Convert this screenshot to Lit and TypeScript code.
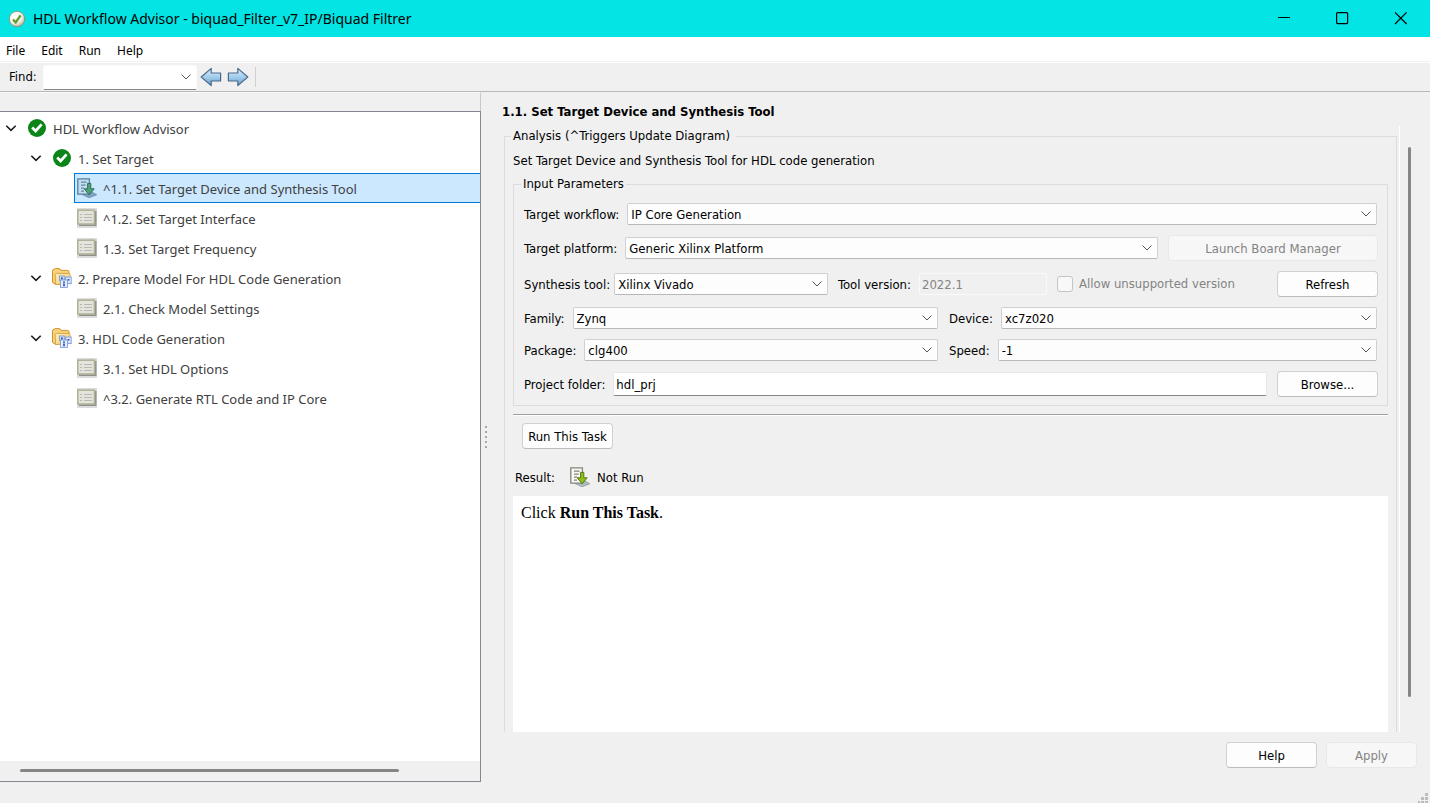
import { LitElement, html, css, svg, nothing, type TemplateResult } from "lit";
import { customElement, property, state } from "lit/decorators.js";
import { classMap } from "lit/directives/class-map.js";

/* ---------- icons ---------- */

const appIcon = svg`<svg class="app-icon" width="18" height="18" viewBox="0 0 18 18" aria-hidden="true">
  <defs><radialGradient id="ball" cx="0.35" cy="0.3" r="0.8"><stop offset="0" stop-color="#fff"/><stop offset="0.6" stop-color="#f0efe4"/><stop offset="1" stop-color="#a9a58c"/></radialGradient></defs>
  <circle cx="9" cy="9" r="7.7" fill="url(#ball)" stroke="#8d8a6c" stroke-width="0.8"/>
  <path d="M5 9.4 7.7 12.4 12.6 5.4" fill="none" stroke="#5c9c2c" stroke-width="2.2"/>
</svg>`;

const passedIcon = svg`<svg width="20" height="20" viewBox="0 0 20 20" aria-hidden="true">
  <circle cx="10" cy="10" r="9" fill="#0b8418"/>
  <path d="M5.2 9.6 8.6 12.9 14.6 6.4" fill="none" stroke="#fff" stroke-width="2.8"/>
</svg>`;

const taskIcon = svg`<svg width="20" height="20" viewBox="0 0 20 20" aria-hidden="true">
  <rect width="20" height="20" fill="#dcdcdc"/>
  <path d="M2 17.2H18.6V3" fill="none" stroke="#8f8f8c" stroke-width="1.8"/>
  <rect x="0.8" y="2.2" width="16.6" height="13.8" fill="#e4e4dc" stroke="#b2b498" stroke-width="1.6"/>
  <path d="M3 6.5h2M3 9.5h2M3 12.5h2M7 6.5h8M7 9.5h8M7 12.5h8" stroke="#b9b9b4" stroke-width="1"/>
</svg>`;

const folderIcon = svg`<svg width="20" height="20" viewBox="0 0 20 20" aria-hidden="true">
  <defs><linearGradient id="gold" x1="0" y1="0" x2="1" y2="1"><stop offset="0" stop-color="#fdf0c0"/><stop offset="1" stop-color="#f2c55c"/></linearGradient></defs>
  <path d="M0.5 14.5V3.2Q0.5 1.6 2 1.2L3.2 0.6H7Q8.4 0.6 9 2.4H15.5Q17 2.4 17 4V14L4 16.6Z" fill="#f6d37c" stroke="#cf9230"/>
  <path d="M3.6 16.6 3.2 6.4Q3.2 5.4 4.4 5.4H16.8Q18 5.4 18 6.6V15.4Z" fill="url(#gold)" stroke="#d9a040" stroke-width="0.9"/>
  <rect x="7.5" y="8" width="4.8" height="4.4" fill="#cfe0fa" stroke="#7c9cda" stroke-width="0.9"/>
  <rect x="13.6" y="9" width="5.6" height="6.6" fill="#dbe7fb" stroke="#7c9cda" stroke-width="0.9"/>
  <rect x="8.4" y="12" width="7" height="7.4" fill="#e6effd" stroke="#7c9cda" stroke-width="0.9"/>
  <path d="M9 9.4h1.8v1.8H9zM15.8 11h1.6v1.6h-1.6zM11 13.4h2v1.4h-2zM11.2 15.4h1.6v2.8h-1.6z" fill="#2f49ac"/>
</svg>`;

const readyIcon = (tinted: boolean) => {
  const page = tinted ? "#c4def0" : "#f7f7f4";
  const edge = tinted ? "#5580a0" : "#85857e";
  const line = tinted ? "#5f88a8" : "#85857e";
  const arrow = tinted ? "#4fa278" : "#8fbe1e";
  const arrowEdge = tinted ? "#2b6f58" : "#547a0c";
  const tray = tinted ? "#7ea4bf" : "#a9bcc4";
  return svg`<svg width="20" height="20" viewBox="0 0 20 20" aria-hidden="true">
    <path d="M5 16.6 14 13.4 19.8 16.8 12 19.8z" fill=${tray} stroke=${edge} stroke-width="0.6"/>
    <path d="M0.8 0.8H12.4V16.2H0.8z" fill=${page} stroke=${edge} stroke-width="1.3"/>
    <path d="M4 4.2h5.6M4 7.2h4.6M4 10.2h3M4 13.2h3" stroke=${line} stroke-width="1.2"/>
    <path d="M10.6 5.4h3.2v5.4h3.4L12.2 16.8 7.2 10.8h3.4z" fill=${arrow} stroke=${arrowEdge} stroke-width="1"/>
  </svg>`;
};

const chevron = svg`<svg width="12" height="12" viewBox="0 0 12 12" aria-hidden="true">
  <path d="M1.3 3.8 6 8.4 10.7 3.8" fill="none" stroke="#1c1c1c" stroke-width="1.6"/>
</svg>`;

const arrowIcon = (d: string) => svg`<svg width="22" height="20" viewBox="0 0 22 20" aria-hidden="true">
  <defs><linearGradient id="sky" x1="0" y1="0" x2="0" y2="1"><stop offset="0" stop-color="#dcefff"/><stop offset="0.5" stop-color="#a3cdec"/><stop offset="1" stop-color="#659cc8"/></linearGradient></defs>
  <path d=${d} fill="url(#sky)" stroke="#4a6a8c" stroke-width="1.2" stroke-linejoin="round"/>
</svg>`;

/* ---------- data ---------- */

interface TreeItem {
  label: string;
  icon: TemplateResult | ReturnType<typeof svg>;
  children?: TreeItem[];
}

const tree: TreeItem = {
  label: "HDL Workflow Advisor",
  icon: passedIcon,
  children: [
    {
      label: "1. Set Target",
      icon: passedIcon,
      children: [
        { label: "^1.1. Set Target Device and Synthesis Tool", icon: readyIcon(true) },
        { label: "^1.2. Set Target Interface", icon: taskIcon },
        { label: "1.3. Set Target Frequency", icon: taskIcon },
      ],
    },
    {
      label: "2. Prepare Model For HDL Code Generation",
      icon: folderIcon,
      children: [{ label: "2.1. Check Model Settings", icon: taskIcon }],
    },
    {
      label: "3. HDL Code Generation",
      icon: folderIcon,
      children: [
        { label: "3.1. Set HDL Options", icon: taskIcon },
        { label: "^3.2. Generate RTL Code and IP Core", icon: taskIcon },
      ],
    },
  ],
};

/* ---------- task tree ---------- */

@customElement("task-tree")
class TaskTree extends LitElement {
  static styles = css`
    :host { display: block; font: 13px/20px "Noto Sans", sans-serif; color: #404040; }
    ul { list-style: none; margin: 0; padding: 0; }
    .group { padding-left: 25px; }
    .row { display: flex; height: 30px; }
    .toggle { flex: none; width: 24px; border: 0; padding: 0 2px 0 5px; background: none; display: flex; align-items: center; }
    .toggle.closed svg { transform: rotate(-90deg); }
    .spacer { flex: none; width: 24px; }
    .item {
      flex: 1; display: flex; align-items: center; gap: 6px; box-sizing: border-box;
      border: 1px solid transparent; border-right: 0; padding: 0 0 0 2px;
      background: none; font: inherit; color: inherit; text-align: left; white-space: nowrap;
    }
    .item span { padding-top: 2px; }
    .item svg { flex: none; }
    .item.selected { background: #cce8ff; border-color: #0078d7; }
  `;

  @state() private selected = "^1.1. Set Target Device and Synthesis Tool";
  @state() private closed: string[] = [];

  private toggle(label: string) {
    this.closed = this.closed.includes(label) ? this.closed.filter((l) => l !== label) : [...this.closed, label];
  }

  private renderItem(item: TreeItem): TemplateResult {
    const closed = this.closed.includes(item.label);
    return html`<li role="treeitem" aria-selected=${this.selected === item.label}>
      <div class="row">
        ${item.children
          ? html`<button class=${classMap({ toggle: true, closed })} aria-label="Expand or collapse" @click=${() => this.toggle(item.label)}>${chevron}</button>`
          : html`<span class="spacer"></span>`}
        <button class=${classMap({ item: true, selected: this.selected === item.label })} @click=${() => (this.selected = item.label)}>
          ${item.icon}<span>${item.label}</span>
        </button>
      </div>
      ${item.children && !closed ? html`<ul class="group" role="group">${item.children.map((c) => this.renderItem(c))}</ul>` : nothing}
    </li>`;
  }

  render() {
    return html`<ul role="tree" aria-label="Tasks">${this.renderItem(tree)}</ul>`;
  }
}

/* ---------- task form ---------- */

const controlStyles = css`
  button, select, input { font: inherit; color: #000; margin: 0; box-sizing: border-box; }
  .btn {
    height: 26px; padding: 2px 5px 0; border: 1px solid #d0d0d0; border-bottom-color: #bcbcbc; border-radius: 4px;
    background: #fdfdfd; white-space: nowrap;
  }
  .btn:disabled { color: #838383; background: #f7f7f7; border-color: #e8e8e8; }
  .combo {
    appearance: none; min-width: 0; height: 22px; padding: 1px 24px 0 3px; border: 1px solid #d0d0d0; border-bottom-color: #b8b8b8; border-radius: 2px;
    background: #fdfdfd url("data:image/svg+xml,%3Csvg xmlns='http://www.w3.org/2000/svg' width='10' height='6'%3E%3Cpath d='M.5.5 5 5 9.5.5' fill='none' stroke='%23555'/%3E%3C/svg%3E") no-repeat right 5px center;
  }
`;

@customElement("task-form")
class TaskForm extends LitElement {
  static styles = [
    controlStyles,
    css`
      :host { display: block; }
      fieldset { margin: 0; min-width: 0; border: 1px solid #dcdcdc; }
      legend { line-height: 16px; }
      .params { padding: 11px 9px 8px 10px; }
      .params legend { padding: 0 2px; margin-left: -3px; }
      .rows { display: grid; gap: 10px; }
      .row { display: flex; align-items: center; gap: 10px; }
      .pair { display: grid; grid-template-columns: 414fr 428fr; column-gap: 11px; padding-right: 1px; }
      .full { padding-right: 1px; }
      .field { display: flex; align-items: center; gap: 8px; flex: 1; min-width: 0; white-space: nowrap; }
      .field > label { padding-top: 1px; }
      .field > .combo, .field > .text { flex: 1; width: 0; }
      .tool { flex: 0 1 304px; gap: 4px; }
      .version { flex: 0 1 209px; }
      .text { height: 24px; padding: 0 2px; border: 1px solid #e8e8e8; border-bottom-color: #868686; border-radius: 2px; background: #fff; }
      .text:disabled { height: 22px; color: #838383; background: #f0f0f0; border-color: #f9f9f9; }
      .check { display: flex; align-items: center; gap: 6px; color: #838383; white-space: nowrap; }
      .check input { appearance: none; width: 16px; height: 16px; border: 1px solid #c4c4c4; border-radius: 3px; background: #f8f8f8; }
      .board { width: 210px; }
      .side { width: 101px; }
      .check + .side { margin-left: auto; }
    `,
  ];

  private combo(id: string, label: string, value: string, cls = "") {
    return html`<div class="field ${cls}">
      <label for=${id}>${label}</label>
      <select class="combo" id=${id}><option>${value}</option></select>
    </div>`;
  }

  render() {
    return html`<fieldset class="params">
      <legend>Input Parameters</legend>
      <div class="rows">
        <div class="row full">${this.combo("workflow", "Target workflow:", "IP Core Generation")}</div>
        <div class="row">
          ${this.combo("platform", "Target platform:", "Generic Xilinx Platform")}
          <button class="btn board" disabled>Launch Board Manager</button>
        </div>
        <div class="row">
          ${this.combo("tool", "Synthesis tool:", "Xilinx Vivado", "tool")}
          <div class="field version">
            <label for="version">Tool version:</label>
            <input class="text" id="version" value="2022.1" disabled />
          </div>
          <label class="check"><input type="checkbox" disabled />Allow unsupported version</label>
          <button class="btn side">Refresh</button>
        </div>
        <div class="pair">${this.combo("family", "Family:", "Zynq")}${this.combo("device", "Device:", "xc7z020")}</div>
        <div class="pair">${this.combo("package", "Package:", "clg400")}${this.combo("speed", "Speed:", "-1")}</div>
        <div class="row">
          <div class="field">
            <label for="folder">Project folder:</label>
            <input class="text" id="folder" value="hdl_prj" />
          </div>
          <button class="btn side">Browse...</button>
        </div>
      </div>
    </fieldset>`;
  }
}

/* ---------- window ---------- */

@customElement("app-root")
class AppRoot extends LitElement {
  static styles = [
    controlStyles,
    css`
      :host {
        display: flex; flex-direction: column; height: 100vh; min-height: 560px; overflow: hidden;
        background: #f0f0f0; color: #000; font: 13px/16px "DejaVu Sans Condensed", "DejaVu Sans", sans-serif;
      }
      .title { flex: none; display: flex; align-items: center; height: 37px; padding-left: 8px; background: #03e4e4; font-family: "Noto Sans", sans-serif; }
      .title h1 { flex: 1; margin: 0 0 0 7px; font-size: 14px; font-weight: 400; line-height: 20px; }
      .win { width: 58px; height: 37px; padding: 0; border: 0; background: none; display: grid; place-items: center; }
      .menu { flex: none; display: flex; align-items: center; gap: 16px; height: 25px; padding: 4px 6px 0; background: #fff; border-bottom: 1px solid #f0f0f0; box-sizing: border-box; }
      .menu button { padding: 0; border: 0; background: none; font: 12px/16px "Noto Sans", sans-serif; }
      .tools { flex: none; display: flex; align-items: center; height: 30px; box-sizing: border-box; padding-left: 9px; border-top: 1px solid #fff; border-bottom: 1px solid #b8b8b8; }
      .find { width: 154px; height: 25px; margin: 0 3px 0 6px; border-color: #fafafa; border-bottom-color: #868686; background-color: #fff; }
      .nav { padding: 0; border: 0; background: none; width: 22px; height: 20px; margin-right: 5px; display: grid; }
      .sep { width: 1px; height: 20px; background: #d0d0d0; margin-left: 1px; }
      .main { flex: 1; display: flex; min-height: 0; }
      .left { flex: 0 0 34%; max-width: 481px; min-width: 320px; display: flex; flex-direction: column; margin-bottom: 21px; }
      .strip { flex: none; height: 19px; border-top: 1px solid #fafafa; border-right: 1px solid #c8c8c8; box-sizing: border-box; }
      .tree { flex: 1; min-height: 0; display: flex; flex-direction: column; border: 1px solid #828790; border-left: 0; background: #fff; }
      .tree task-tree { flex: 1; overflow: hidden; padding-top: 1px; }
      .hbar { flex: none; height: 20px; padding: 8px 81px 0 20px; background: #f0f0f0; box-sizing: border-box; }
      .hthumb { height: 3px; border-radius: 2px; background: #868686; }
      .split { flex: none; width: 21px; display: flex; flex-direction: column; justify-content: center; padding: 0 0 22px 4px; box-sizing: border-box; gap: 3px; }
      .split i { width: 2px; height: 2px; background: #a8a8a8; }
      .right { flex: 1; min-width: 0; display: flex; flex-direction: column; padding-top: 12px; }
      .right h2 { margin: 0 0 6px; font-size: 13px; line-height: 16px; font-weight: 700; }
      .scroller { flex: 1; min-height: 0; display: flex; }
      .content { flex: 1; min-width: 0; padding: 2px 2px 0; border-right: 1px solid #fff; overflow: hidden; }
      .analysis { margin: 0; min-width: 0; height: 100%; border: 1px solid #dcdcdc; border-bottom: 0; padding: 9px 8px 0; display: flex; flex-direction: column; }
      .analysis legend { padding: 0 6px 0 2px; margin-left: -2px; }
      .intro { margin: 0 0 7px; }
      .rule { margin: 8px 0 0; border: 0; border-top: 1px solid #a0a0a0; border-bottom: 1px solid #fff; }
      .run { margin: 7px 9px 0; align-self: flex-start; width: 91px; }
      .result { display: flex; align-items: center; gap: 7px; margin: 17px 2px 8px; height: 22px; }
      .result span { padding-top: 1px; }
      .result svg { margin-left: 8px; }
      .output { flex: 1; margin: 0; padding: 8px; background: #fff; font: 16px/18px "Liberation Serif", serif; }
      .analysis .body { display: flex; flex-direction: column; height: 100%; }
      .vbar { flex: none; width: 30px; box-sizing: border-box; padding: 21px 18px 35px 8px; }
      .vthumb { width: 3px; height: 100%; border-radius: 2px; background: #868686; }
      .foot { flex: none; display: flex; justify-content: flex-end; gap: 9px; padding: 10px 13px 0; }
      .foot .btn { width: 91px; }
      .grip { display: flex; justify-content: flex-end; height: 35px; align-items: flex-end; }
      .grip svg { display: block; }
    `,
  ];

  @property() heading = "HDL Workflow Advisor - biquad_Filter_v7_IP/Biquad Filtrer";

  render() {
    return html`
      <header class="title">
        ${appIcon}
        <h1>${this.heading}</h1>
        <button class="win" aria-label="Minimize"><svg width="14" height="14"><path d="M0 5.5h12" stroke="#000"/></svg></button>
        <button class="win" aria-label="Maximize"><svg width="14" height="14"><rect x="0.6" y="0.6" width="11" height="11" rx="1" fill="none" stroke="#000" stroke-width="1.2"/></svg></button>
        <button class="win" aria-label="Close"><svg width="14" height="14"><path d="M1 0.4 12.6 12M12.6 0.4 1 12" stroke="#000" stroke-width="1.2"/></svg></button>
      </header>
      <nav class="menu">${["File", "Edit", "Run", "Help"].map((m) => html`<button>${m}</button>`)}</nav>
      <div class="tools">
        <label for="find">Find:</label>
        <select class="combo find" id="find"><option></option></select>
        <button class="nav" aria-label="Previous">${arrowIcon("M1.2 10 11.2 1.4V6H20.6V14H11.2V18.6z")}</button>
        <button class="nav" aria-label="Next">${arrowIcon("M20.8 10 10.8 1.4V6H1.4V14H10.8V18.6z")}</button>
        <span class="sep"></span>
      </div>
      <main class="main">
        <section class="left">
          <div class="strip"></div>
          <div class="tree">
            <task-tree></task-tree>
            <div class="hbar"><div class="hthumb"></div></div>
          </div>
        </section>
        <div class="split"><i></i><i></i><i></i><i></i><i></i></div>
        <section class="right">
          <h2>1.1. Set Target Device and Synthesis Tool</h2>
          <div class="scroller">
            <div class="content">
              <fieldset class="analysis">
                <legend>Analysis (^Triggers Update Diagram)</legend>
                <div class="body">
                  <p class="intro">Set Target Device and Synthesis Tool for HDL code generation</p>
                  <task-form></task-form>
                  <hr class="rule" />
                  <button class="btn run">Run This Task</button>
                  <div class="result"><span>Result:</span>${readyIcon(false)}<span>Not Run</span></div>
                  <p class="output">Click <b>Run This Task</b>.</p>
                </div>
              </fieldset>
            </div>
            <div class="vbar"><div class="vthumb"></div></div>
          </div>
          <div class="foot">
            <button class="btn">Help</button>
            <button class="btn" disabled>Apply</button>
          </div>
          <div class="grip"><svg width="12" height="10" aria-hidden="true"><path d="M7 0h3v3h-3zM3 4h3v3h-3zM7 4h3v3h-3zM0 8h2v2h-2zM3 8h3v2h-3zM7 8h3v2h-3z" fill="#bdbdbd"/></svg></div>
        </section>
      </main>
    `;
  }
}
